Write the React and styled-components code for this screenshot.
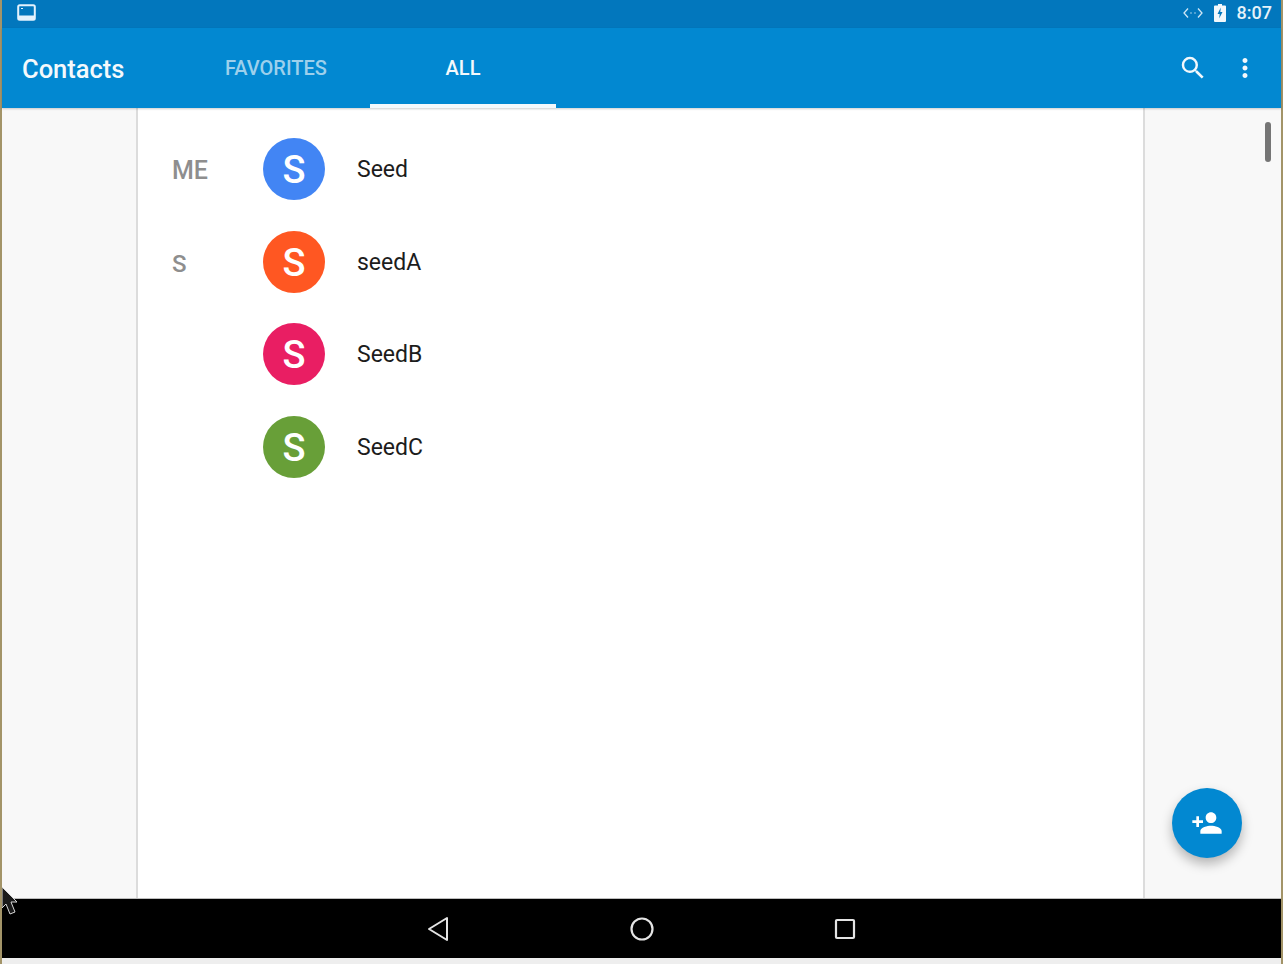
import React from 'react'
import styled, { createGlobalStyle } from 'styled-components'
import { MdSearch, MdMoreVert, MdPersonAdd } from 'react-icons/md'

const Global = createGlobalStyle`
  html, body { margin: 0; padding: 0; }
  body { font-family: Roboto, "Liberation Sans", sans-serif; background: #a39468; }
`

const contacts = [
  { id: 1, name: 'Seed', section: 'ME', big: true, color: '#4285f4' },
  { id: 2, name: 'seedA', section: 'S', color: '#ff5722' },
  { id: 3, name: 'SeedB', section: '', color: '#e91e63' },
  { id: 4, name: 'SeedC', section: '', color: '#689f38' },
]

function App() {
  return (
    <>
      <Global />
      <Frame>
        <Screen>
          <StatusBar>
            <svg width="20" height="17" viewBox="0 0 20 17">
              <rect x="1.2" y="1.2" width="16.6" height="14.6" rx="1.5" fill="none" stroke="#e3f2fd" strokeWidth="2" />
              <rect x="2" y="11.5" width="15" height="4" fill="#e3f2fd" />
              <path d="M4 4.5h2" stroke="#e3f2fd" strokeWidth="1" />
            </svg>
            <StatusRight>
              <svg width="20" height="12" viewBox="0 0 20 12" fill="none" stroke="#cfe6f5" strokeWidth="1.3">
                <path d="M5 1.5 1 6l4 4.5M15 1.5 19 6l-4 4.5" />
                <path d="M7.5 6h1M11.500 6h1" />
              </svg>
              <svg width="12" height="18" viewBox="0 0 12 18">
                <path d="M4 0h4v1.500h3a1 1 0 0 1 1 1V17a1 1 0 0 1-1 1H1a1 1 0 0 1-1-1V2.500a1 1 0 0 1 1-1h3z" fill="#f2f8fc" />
                <path d="M6.800 3.500 3.500 10h2.200l-.5 4.500L8.500 8H6.300z" fill="#0277bd" />
              </svg>
              <Clock>8:07</Clock>
            </StatusRight>
          </StatusBar>
          <Toolbar>
            <Title>Contacts</Title>
            <Tab>FAVORITES</Tab>
            <Tab $active>ALL</Tab>
            <Actions>
              <MdSearch size={30} color="#f2f8fc" />
              <MdMoreVert size={30} color="#f2f8fc" />
            </Actions>
          </Toolbar>
          <Body>
            <Card>
              {contacts.map((c) => (
                <Row key={c.id}>
                  <Section $big={c.big}>{c.section}</Section>
                  <Avatar $color={c.color}>S</Avatar>
                  <Name>{c.name}</Name>
                </Row>
              ))}
            </Card>
            <ScrollThumb />
            <Fab>
              <MdPersonAdd size={32} color="#fff" />
            </Fab>
            <Cursor width="20" height="30" viewBox="0 0 20 30">
              <path d="M0 0 15 15 9 15 13 25 8 27 4 17 0 21Z" fill="#1a1a1a" stroke="#d8d8d8" strokeWidth="1" />
            </Cursor>
          </Body>
          <NavBar>
            <svg width="24" height="26" viewBox="0 0 24 26" fill="none" stroke="#e4e4e4" strokeWidth="2" strokeLinejoin="round">
              <path d="M20 2v22L2 13z" />
            </svg>
            <svg width="26" height="26" viewBox="0 0 26 26" fill="none" stroke="#e4e4e4" strokeWidth="2.200">
              <circle cx="13" cy="13" r="10.500" />
            </svg>
            <svg width="24" height="24" viewBox="0 0 24 24" fill="none" stroke="#e4e4e4" strokeWidth="2.200" strokeLinejoin="round">
              <rect x="3" y="3" width="18" height="18" rx="1" />
            </svg>
          </NavBar>
          <BottomEdge />
        </Screen>
      </Frame>
    </>
  )
}

const Frame = styled.div`
  width: 1283px;
  height: 964px;
  padding: 0 2px;
  box-sizing: border-box;
  overflow: hidden;
`
const Screen = styled.div`
  height: 100%;
  display: flex;
  flex-direction: column;
`
const StatusBar = styled.div`
  height: 28px;
  flex: none;
  background: #0277bd;
  display: flex;
  align-items: center;
  justify-content: space-between;
  padding: 0 9px 3px 15px;
  box-sizing: border-box;
`
const StatusRight = styled.div`
  display: flex;
  align-items: center;
  gap: 11px;
`
const Clock = styled.span`
  color: #e6f2f9;
  font-size: 18px;
  font-weight: 500;
  margin-left: 0;
`
const Toolbar = styled.div`
  height: 80px;
  flex: none;
  background: #0288d1;
  display: flex;
  align-items: stretch;
  position: relative;
  z-index: 1;
  box-shadow: 0 1px 2px rgba(0, 0, 0, 0.2);
`
const Title = styled.div`
  width: 161px;
  padding-left: 20px;
  box-sizing: content-box;
  color: #f4f9fc;
  font-size: 25.500px;
  font-weight: 500;
  line-height: 82px;
`
const Tab = styled.div`
  width: 186px;
  box-sizing: border-box;
  margin-right: ${(p) => (p.$active ? '0' : '1px')};
  text-align: center;
  color: ${(p) => (p.$active ? '#f4f9fc' : '#9dd0ec')};
  font-size: 20px;
  font-weight: 500;
  line-height: 80px;
  border-bottom: 4px solid ${(p) => (p.$active ? '#f4f9fc' : 'transparent')};
`
const Actions = styled.div`
  margin-left: auto;
  display: flex;
  align-items: center;
  gap: 22px;
  padding: 0 21px 0 0;
`
const Body = styled.div`
  flex: 1;
  min-height: 0;
  background: #f8f8f8;
  position: relative;
  padding-left: 134px;
`
const Card = styled.div`
  width: 1009px;
  height: 100%;
  box-sizing: border-box;
  background: #fff;
  border-left: 2px solid #dcdcdc;
  border-right: 2px solid #dcdcdc;
  padding: 30px 0 0 34px;
`
const Row = styled.div`
  height: 92.500px;
  display: flex;
  align-items: flex-start;
`
const Section = styled.div`
  width: 91px;
  height: 62px;
  line-height: 66px;
  color: #8e8e8e;
  font-size: ${(p) => (p.$big ? '25px' : '24px')};
  font-weight: 500;
`
const Avatar = styled.div`
  width: 62px;
  height: 62px;
  flex: none;
  border-radius: 50%;
  background: ${(p) => p.$color};
  color: #fff;
  text-align: center;
  font-size: 38px;
  font-weight: 500;
  line-height: 64px;
`
const Name = styled.div`
  margin-left: 32px;
  color: #1c1c1c;
  font-size: 23px;
  line-height: 64px;
`
const ScrollThumb = styled.div`
  position: absolute;
  left: 1263px;
  top: 14px;
  width: 6px;
  height: 40px;
  border-radius: 3px;
  background: #757575;
`
const Fab = styled.div`
  position: absolute;
  left: 1170px;
  top: 680px;
  width: 70px;
  height: 70px;
  border-radius: 50%;
  background: #0288d1;
  box-shadow: 0 6px 12px rgba(0, 0, 0, 0.28);
  display: flex;
  align-items: center;
  justify-content: center;
`
const Cursor = styled.svg`
  position: absolute;
  left: 0;
  bottom: -19px;
  z-index: 3;
`
const NavBar = styled.div`
  height: 60px;
  flex: none;
  box-sizing: border-box;
  background: #000;
  border-top: 1px solid #bdbdbd;
  display: flex;
  align-items: center;
  justify-content: center;
  gap: 178px;
  padding: 1px 0 0 0;
`
const BottomEdge = styled.div`
  height: 6px;
  flex: none;
  background: #eeeeee;
`

export default App
